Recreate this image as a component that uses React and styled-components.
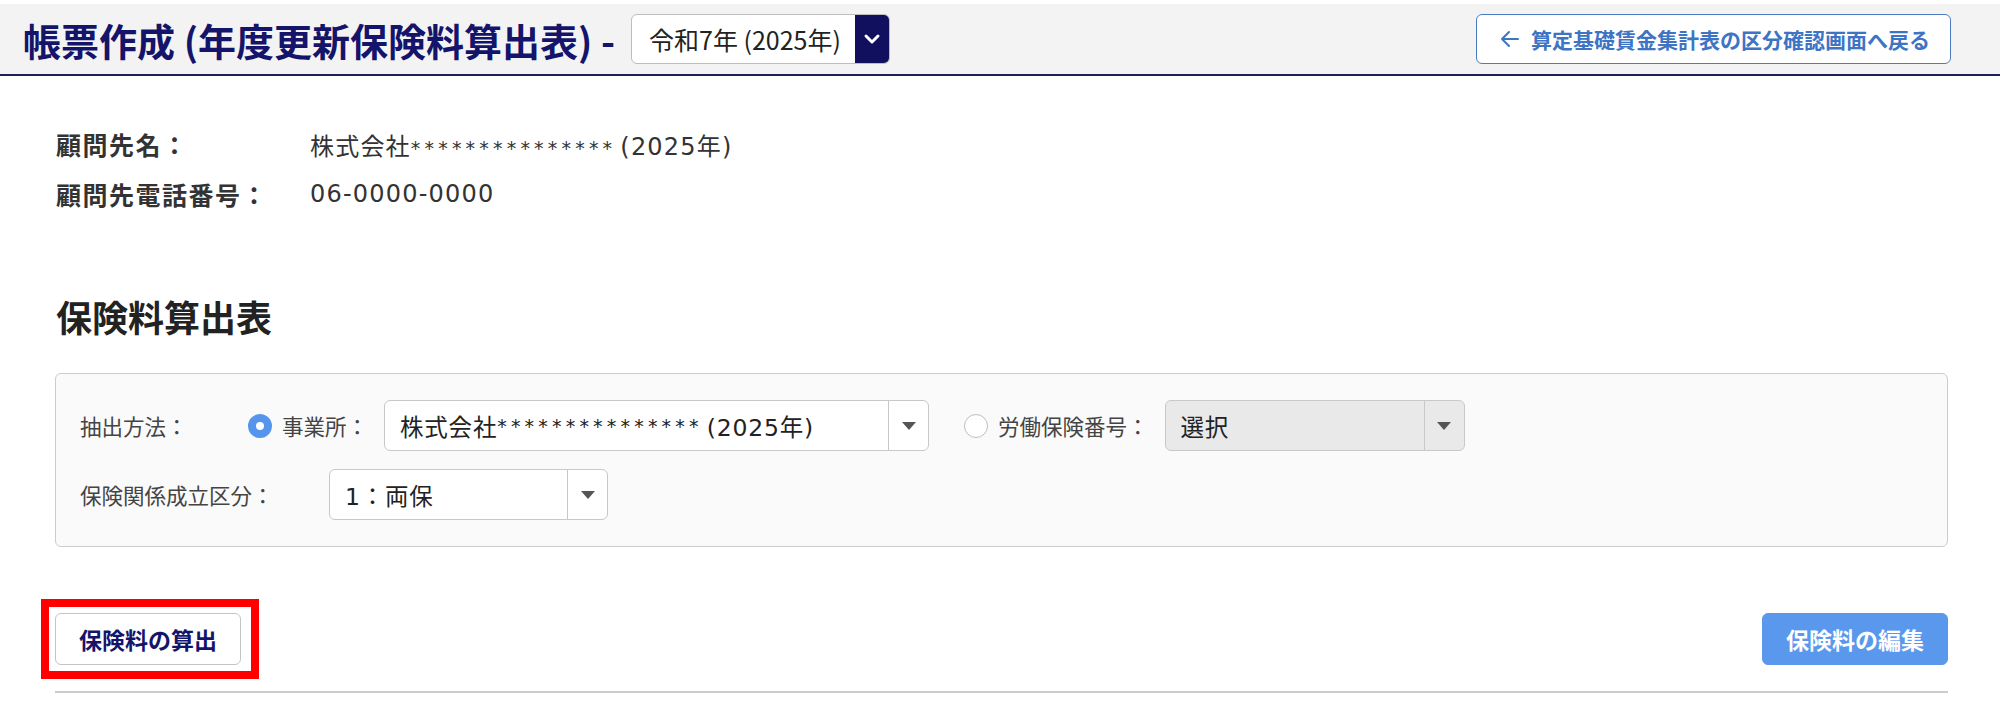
import React from 'react'
import styled, { createGlobalStyle } from 'styled-components'

const GlobalStyle = createGlobalStyle`
    body {
        margin: 0;
        background: #ffffff;
        font-family: "DejaVu Sans", "Noto Sans CJK JP", sans-serif;
        color: #333333;
    }
`

const Header = styled.header`
    margin-top: 4px;
    height: 70px;
    padding: 0 49px 0 23px;
    display: flex;
    align-items: center;
    background: #f3f3f3;
    border-bottom: 2px solid #1f1f5c;
    font-family: "Noto Sans CJK JP", sans-serif;
`
const Title = styled.h1`
    margin: 0;
    font-size: 38px;
    font-weight: 700;
    color: #14146b;
    white-space: nowrap;
`
const YearSelect = styled.div`
    margin-left: 16px;
    width: 259px;
    height: 50px;
    box-sizing: border-box;
    display: flex;
    align-items: stretch;
    background: #ffffff;
    border: 1px solid #bdbdbd;
    border-radius: 6px;
    overflow: hidden;
`
const YearText = styled.span`
    flex: 1;
    display: flex;
    align-items: center;
    padding-left: 17px;
    font-size: 25px;
    color: #222222;
    white-space: nowrap;
`
const YearButton = styled.span`
    width: 34px;
    display: flex;
    align-items: center;
    justify-content: center;
    background: #10105e;
`
const BackButton = styled.button`
    margin-left: auto;
    height: 50px;
    padding: 0 20px 0 22px;
    display: flex;
    align-items: center;
    gap: 10px;
    background: #ffffff;
    border: 1px solid #4b7cc2;
    border-radius: 6px;
    font-family: "Noto Sans CJK JP", sans-serif;
    font-size: 21px;
    font-weight: 700;
    color: #3d74c4;
    white-space: nowrap;
`

const Main = styled.main`
    padding: 43px 52px 0 56px;
`
const InfoRow = styled.div`
    display: flex;
    align-items: center;
    height: 50px;
    font-size: 24px;
`
const InfoLabel = styled.span`
    width: 254px;
    font-size: 25px;
    font-weight: 700;
    color: #333333;
    letter-spacing: 1.5px;
`
const InfoValue = styled.span`
    color: #333333;
    white-space: nowrap;
    letter-spacing: 1.2px;
`
const Stars = styled.span`
    font-size: 19px;
    letter-spacing: 4.2px;
    margin-right: 4px;
`
const SectionTitle = styled.h2`
    margin: 72px 0 32px;
    font-family: "Noto Sans CJK JP", sans-serif;
    font-size: 36px;
    font-weight: 700;
    color: #222222;
    line-height: 50px;
`
const Panel = styled.div`
    margin-left: -1px;
    padding: 26px 24px 26px;
    display: flex;
    flex-direction: column;
    gap: 18px;
    background: #fafafa;
    border: 1px solid #cccccc;
    border-radius: 6px;
`
const FieldRow = styled.div`
    display: flex;
    align-items: center;
    height: 51px;
`
const FieldLabel = styled.span`
    width: ${p => p.$width}px;
    font-size: 21.5px;
    color: #444444;
    white-space: nowrap;
`
const RadioLabel = styled.label`
    display: flex;
    align-items: center;
    gap: 10px;
    margin-left: ${p => p.$ml || 0}px;
    margin-right: ${p => p.$mr}px;
    font-size: 21.5px;
    color: #444444;
    white-space: nowrap;
`
const Radio = styled.span`
    width: 24px;
    height: 24px;
    box-sizing: border-box;
    border-radius: 50%;
    background: #ffffff;
    border: ${p => (p.$checked ? '8px solid #5596ec' : '1px solid #bfbfbf')};
`
const Select = styled.div`
    width: ${p => p.$width}px;
    height: 51px;
    box-sizing: border-box;
    display: flex;
    background: ${p => (p.$disabled ? '#e9e9e9' : '#ffffff')};
    border: 1px solid #c8c8c8;
    border-radius: 6px;
`
const SelectText = styled.span`
    flex: 1;
    display: flex;
    align-items: center;
    padding-left: 15px;
    font-size: 23.5px;
    letter-spacing: 0.8px;
    color: #222222;
    white-space: nowrap;
    overflow: hidden;
`
const SelectArrow = styled.span`
    width: 39px;
    display: flex;
    align-items: center;
    justify-content: center;
    border-left: 1px solid #c8c8c8;
    &::after {
        content: '';
        border-left: 7px solid transparent;
        border-right: 7px solid transparent;
        border-top: 8px solid #555555;
    }
`

const ActionBar = styled.div`
    margin-top: 66px;
    padding-bottom: 26px;
    display: flex;
    justify-content: space-between;
    align-items: center;
    border-bottom: 2px solid #cccccc;
    margin-left: -1px;
`
const Highlight = styled.span`
    position: relative;
    display: inline-flex;
    &::after {
        content: '';
        position: absolute;
        inset: -14px -18px -14px -14px;
        border: 8px solid #ff0000;
        pointer-events: none;
    }
`
const ActionButton = styled.button`
    width: 186px;
    height: 52px;
    font-family: "Noto Sans CJK JP", sans-serif;
    font-size: 23px;
    font-weight: 700;
    border-radius: 6px;
    color: ${p => (p.$primary ? '#ffffff' : '#14146b')};
    background: ${p => (p.$primary ? '#5a98ee' : '#ffffff')};
    border: 1px solid ${p => (p.$primary ? '#5a98ee' : '#c4c4c4')};
`

const Chevron = () => (
    <svg width="18" height="12" viewBox="0 0 18 12">
        <path d="M3 3 L9 9 L15 3" fill="none" stroke="#ffffff" strokeWidth="3" strokeLinecap="round" strokeLinejoin="round" />
    </svg>
)

const ArrowLeft = () => (
    <svg width="22" height="22" viewBox="0 0 22 22">
        <path d="M19 11 H3 M10 4 L3 11 L10 18" fill="none" stroke="#3d74c4" strokeWidth="2" strokeLinecap="round" strokeLinejoin="round" />
    </svg>
)

const App = () => {
    return (
        <>
            <GlobalStyle />
            <Header>
                <Title>帳票作成 (年度更新保険料算出表) -</Title>
                <YearSelect>
                    <YearText>令和7年 (2025年)</YearText>
                    <YearButton><Chevron /></YearButton>
                </YearSelect>
                <BackButton>
                    <ArrowLeft />
                    算定基礎賃金集計表の区分確認画面へ戻る
                </BackButton>
            </Header>
            <Main>
                <InfoRow>
                    <InfoLabel>顧問先名：</InfoLabel>
                    <InfoValue>株式会社<Stars>***************</Stars>(2025年)</InfoValue>
                </InfoRow>
                <InfoRow>
                    <InfoLabel>顧問先電話番号：</InfoLabel>
                    <InfoValue>06-0000-0000</InfoValue>
                </InfoRow>
                <SectionTitle>保険料算出表</SectionTitle>
                <Panel>
                    <FieldRow>
                        <FieldLabel $width={168}>抽出方法：</FieldLabel>
                        <RadioLabel $mr={16}>
                            <Radio $checked />
                            事業所：
                        </RadioLabel>
                        <Select $width={545}>
                            <SelectText>株式会社<Stars>***************</Stars>(2025年)</SelectText>
                            <SelectArrow />
                        </Select>
                        <RadioLabel $ml={35} $mr={16}>
                            <Radio />
                            労働保険番号：
                        </RadioLabel>
                        <Select $width={300} $disabled>
                            <SelectText>選択</SelectText>
                            <SelectArrow />
                        </Select>
                    </FieldRow>
                    <FieldRow>
                        <FieldLabel $width={249}>保険関係成立区分：</FieldLabel>
                        <Select $width={279}>
                            <SelectText>1：両保</SelectText>
                            <SelectArrow />
                        </Select>
                    </FieldRow>
                </Panel>
                <ActionBar>
                    <Highlight>
                        <ActionButton>保険料の算出</ActionButton>
                    </Highlight>
                    <ActionButton $primary>保険料の編集</ActionButton>
                </ActionBar>
            </Main>
        </>
    )
}

export default App
